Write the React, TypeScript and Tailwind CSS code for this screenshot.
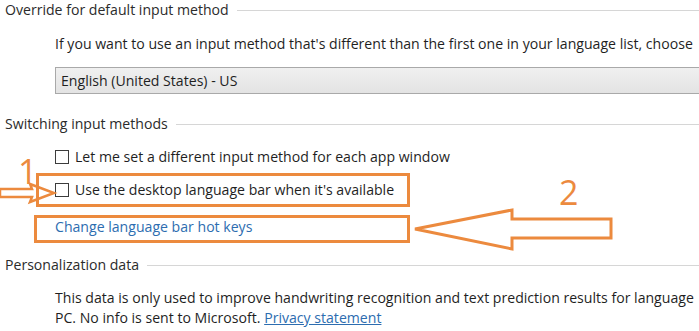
import React from "react";

const orange = "#ec8a3e";

function SectionHeading({ title }: { title: string }) {
  return (
    <div className="flex items-center h-[20px] pl-[5px]">
      <span className="text-[#2b2b2b] whitespace-nowrap">{title}</span>
      <div className="flex-1 h-px bg-[#d6d6d6] ml-2" />
    </div>
  );
}

function Checkbox({ label }: { label: string }) {
  return (
    <div className="flex items-center h-[20px] pl-[55px]">
      <div className="w-[14px] h-[14px] border border-[#3c3c3c] bg-white" />
      <span className="ml-[6px] whitespace-nowrap">{label}</span>
    </div>
  );
}

export default function App() {
  return (
    <div
      className="relative w-[699px] h-[331px] overflow-hidden bg-white text-[#1f1f1f] text-[14.1px] leading-[20px]"
      style={{ fontFamily: '"Open Sans", "Noto Sans", sans-serif' }}
    >
      <SectionHeading title="Override for default input method" />
      <div className="mt-[14px] pl-[55px] whitespace-nowrap">
        If you want to use an input method that's different than the first one in your language list, choose
      </div>
      <div className="mt-[13px] ml-[55px] h-[27px] flex items-center pl-[5px] border border-[#a9a9a9] border-r-0 bg-gradient-to-b from-[#f0f0f0] to-[#e3e3e3]">
        English (United States) - US
      </div>

      <div className="mt-[20px]">
        <SectionHeading title="Switching input methods" />
      </div>
      <div className="mt-[13px]">
        <Checkbox label="Let me set a different input method for each app window" />
      </div>
      <div className="mt-[13px]">
        <Checkbox label="Use the desktop language bar when it's available" />
      </div>
      <div className="mt-[17px] h-[20px] pl-[55px] text-[#2d6db0] whitespace-nowrap">
        Change language bar hot keys
      </div>

      <div className="mt-[18px]">
        <SectionHeading title="Personalization data" />
      </div>
      <div className="mt-[13px] pl-[55px] whitespace-nowrap">
        <div>This data is only used to improve handwriting recognition and text prediction results for language</div>
        <div>
          PC. No info is sent to Microsoft. <span className="text-[#2d6db0] underline">Privacy statement</span>
        </div>
      </div>

      {/* annotations */}
      <svg className="absolute inset-0 pointer-events-none" width="699" height="331" fill="none" stroke={orange} strokeWidth="3">
        <rect x="37.5" y="174.5" width="371" height="31" />
        <rect x="35.5" y="216.5" width="373" height="25" />
        <polygon points="0,189 32,189 30,184 54,193 30,202 32,197 0,197" strokeWidth="2.5" strokeLinejoin="miter" />
        <polygon points="415,229 512,210 512,219 611,219 611,238 512,238 512,249" strokeLinejoin="miter" />
      </svg>
      <span className="absolute left-[18px] top-[151px] text-[34px] leading-[40px] text-[#ec8a3e]">1</span>
      <span className="absolute left-[559px] top-[172px] text-[34px] leading-[40px] text-[#ec8a3e]">2</span>
    </div>
  );
}
